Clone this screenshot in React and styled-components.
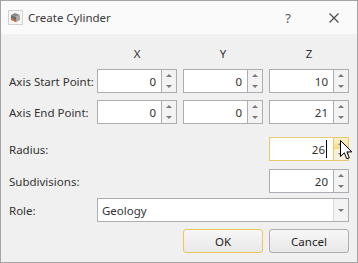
import React from 'react'
import styled, { createGlobalStyle } from 'styled-components'

const GlobalStyle = createGlobalStyle`
  html, body { margin: 0; padding: 0; background: #ffffff; }
  body { font-family: "Noto Sans", "Open Sans", sans-serif; }
  * { box-sizing: border-box; }
`

const Window = styled.div`
  position: relative;
  width: 358px;
  height: 263px;
  border: 1px solid #a4a4a4;
  background: #f0f0f0;
  display: flex;
  flex-direction: column;
  font-size: 11.5px;
  color: #333;
`

const TitleBar = styled.div`
  height: 33px;
  flex-shrink: 0;
  background: #fafafa;
  display: flex;
  align-items: center;
  padding-left: 7px;
`

const Title = styled.div`
  flex: 1;
  margin-left: 5px;
  font-size: 11.5px;
  color: #3a3a3a;
`

const Caption = styled.div`
  width: 46px;
  height: 100%;
  display: flex;
  align-items: center;
  justify-content: center;
  color: #555;
  font-size: 13px;
`

const Body = styled.div`
  padding: 7px 8px 0 8px;
`

const Row = styled.div`
  display: grid;
  grid-template-columns: 82px repeat(3, 80px);
  column-gap: 6px;
  align-items: center;
  height: 24px;
  margin-top: ${({ $mt }) => $mt || 0}px;
`

const Head = styled.div`
  text-align: center;
  color: #333;
`

const Label = styled.div`
  grid-column: 1;
  white-space: nowrap;
`

const Spin = styled.div`
  grid-column: ${({ $col }) => $col || 'auto'};
  display: flex;
  height: 24px;
  border: 1px solid ${({ $hot }) => ($hot ? '#e6c86e' : '#abadb3')};
  background: #fff;
`

const Field = styled.div`
  flex: 1;
  display: flex;
  align-items: center;
  justify-content: flex-end;
  padding-right: ${({ $caret }) => ($caret ? 6 : 5)}px;
  border-right: 1px solid ${({ $hot }) => ($hot ? '#e6c86e' : '#abadb3')};
`

const Caret = styled.span`
  display: inline-block;
  width: 1px;
  height: 18px;
  margin-left: 1px;
  background: #000;
`

const Arrows = styled.div`
  width: 14px;
  display: flex;
  flex-direction: column;
`

const Half = styled.div`
  flex: 1;
  display: flex;
  align-items: center;
  justify-content: center;
  background: ${({ $hot, $down }) =>
    $hot
      ? $down
        ? 'linear-gradient(#f9efcc, #f5f0e2)'
        : 'linear-gradient(#fdf3cc, #f6d983)'
      : '#f3f3f3'};
`

const Tri = styled.span`
  width: 0;
  height: 0;
  border-left: 3px solid transparent;
  border-right: 3px solid transparent;
  ${({ $down }) =>
    $down ? 'border-top: 3px solid #7a7a7a;' : 'border-bottom: 3px solid #7a7a7a;'}
`

const Combo = styled.div`
  grid-column: 2 / 5;
  display: flex;
  height: 24px;
  border: 1px solid #abadb3;
  background: #fff;
`

const ComboText = styled.div`
  flex: 1;
  display: flex;
  align-items: center;
  padding-left: 4px;
  border-right: 1px solid #d9d9d9;
`

const ComboButton = styled.div`
  width: 14px;
  display: flex;
  align-items: center;
  justify-content: center;
  background: #f3f3f3;
`

const Button = styled.button`
  grid-column: ${({ $col }) => $col};
  height: 24px;
  padding: 0;
  font: inherit;
  color: #222;
  border: 1px solid ${({ $default }) => ($default ? '#ebc85c' : '#adadad')};
  border-radius: 3px;
  background: linear-gradient(#f7f7f7, #e8e8e8);
`

const Pointer = styled.svg`
  position: absolute;
  left: 339px;
  top: 139px;
`

const CylinderIcon = () => (
  <svg width="15" height="15" viewBox="0 0 15 15">
    <rect x="0.5" y="0.5" width="14" height="14" fill="#f6f6f6" stroke="#d2d2d2" />
    <path d="M3 5 L7 3 L12 5 L8 7 Z" fill="#8a8a8a" />
    <path d="M3 5 L8 7 L8 12 L3 10 Z" fill="#6a6a6a" />
    <path d="M8 7 L12 5 L12 10 L8 12 Z" fill="#a8a8a8" />
    <path d="M3.5 8 Q5 11 8.5 11.5" stroke="#e8733a" strokeWidth="1.4" fill="none" />
  </svg>
)

const SpinBox = ({ value, col, hot, caret }) => (
  <Spin $col={col} $hot={hot}>
    <Field $hot={hot} $caret={caret}>
      {value}
      {caret && <Caret />}
    </Field>
    <Arrows>
      <Half $hot={hot}><Tri /></Half>
      <Half $hot={hot} $down><Tri $down /></Half>
    </Arrows>
  </Spin>
)

export default function App() {
  return (
    <>
      <GlobalStyle />
      <Window>
        <TitleBar>
          <CylinderIcon />
          <Title>Create Cylinder</Title>
          <Caption>?</Caption>
          <Caption>
            <svg width="10" height="10" viewBox="0 0 10 10">
              <path d="M0.5 0.5 L9.5 9.5 M9.5 0.5 L0.5 9.5" stroke="#444" strokeWidth="1.1" />
            </svg>
          </Caption>
        </TitleBar>
        <Body>
          <Row>
            <span />
            <Head>X</Head>
            <Head>Y</Head>
            <Head>Z</Head>
          </Row>
          <Row $mt={4}>
            <Label>Axis Start Point:</Label>
            <SpinBox value="0" />
            <SpinBox value="0" />
            <SpinBox value="10" />
          </Row>
          <Row $mt={7}>
            <Label>Axis End Point:</Label>
            <SpinBox value="0" />
            <SpinBox value="0" />
            <SpinBox value="21" />
          </Row>
          <Row $mt={13}>
            <Label>Radius:</Label>
            <SpinBox value="26" col={4} hot caret />
          </Row>
          <Row $mt={8}>
            <Label>Subdivisions:</Label>
            <SpinBox value="20" col={4} />
          </Row>
          <Row $mt={5}>
            <Label>Role:</Label>
            <Combo>
              <ComboText>Geology</ComboText>
              <ComboButton><Tri $down /></ComboButton>
            </Combo>
          </Row>
          <Row $mt={7}>
            <Button $col={3} $default>OK</Button>
            <Button $col={4}>Cancel</Button>
          </Row>
        </Body>
        <Pointer width="13" height="21" viewBox="0 0 13 21">
          <path
            d="M0.5 0.5 L0.5 16.5 L4.3 12.8 L6.8 18.8 L9.3 17.8 L6.9 11.9 L11.8 11.9 Z"
            fill="#fff"
            stroke="#000"
            strokeWidth="1"
            strokeLinejoin="miter"
          />
        </Pointer>
      </Window>
    </>
  )
}
